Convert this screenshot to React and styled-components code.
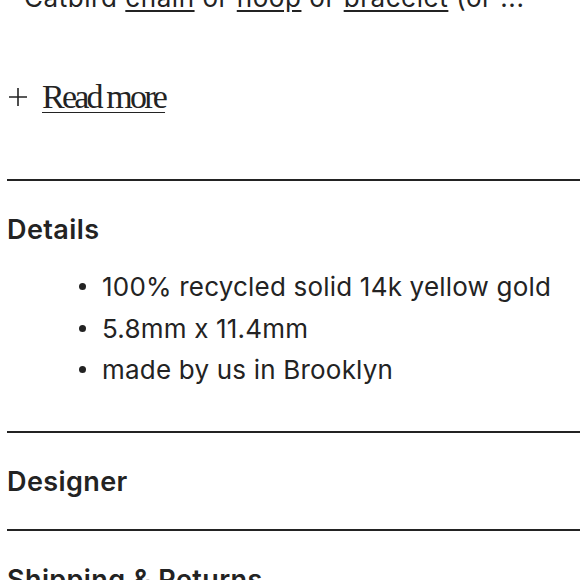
import React from "react"
import styled, { createGlobalStyle } from "styled-components"

const GlobalStyle = createGlobalStyle`
  html, body {
    margin: 0;
    padding: 0;
    background: #fff;
    overflow: hidden;
  }
  body {
    font-family: "Inter", "Lato", sans-serif;
    color: #232323;
  }
`

const Page = styled.div`
  width: 580px;
  height: 580px;
  overflow: hidden;
  padding-left: 7px;
  box-sizing: border-box;
`

const Scroll = styled.div`
  margin-top: -20px;
`

const Blurb = styled.p`
  margin: 0;
  padding-left: 17px;
  font-size: 26px;
  line-height: 36px;
  letter-spacing: 0.55px;
  white-space: nowrap;

  a {
    color: inherit;
    text-decoration: underline;
    text-underline-offset: 3px;
  }
`

const ReadMore = styled.button`
  display: flex;
  align-items: center;
  gap: 14px;
  margin: 62px 0 0;
  padding: 0;
  border: 0;
  background: none;
  color: #232323;
  cursor: pointer;

  span {
    font-family: "Liberation Serif", serif;
    font-size: 34px;
    letter-spacing: -2.8px;
    text-decoration: underline;
    text-decoration-thickness: 1px;
    text-underline-offset: 4px;
  }
`

const Plus = styled.svg`
  width: 20px;
  height: 20px;
  margin-left: 1px;
`

const Spacer = styled.div`
  height: 63px;
`

const Section = styled.section`
  border-top: 2px solid #232323;
  padding: ${({ $open }) => ($open ? "33px 0 40px" : "33px 0 31px")};
`

const Heading = styled.h3`
  margin: 0;
  font-size: 27px;
  line-height: 32px;
  font-weight: 600;
  letter-spacing: 0.4px;
`

const List = styled.ul`
  margin: 20px 0 0;
  padding-left: 72px;
  list-style: none;
  font-size: 26px;
  line-height: 41.5px;
  letter-spacing: 0.2px;
`

const Item = styled.li`
  display: flex;
  align-items: center;

  &::before {
    content: "";
    flex: none;
    width: 7px;
    height: 7px;
    margin-right: 16px;
    border-radius: 50%;
    background: #232323;
  }
`

const details = [
  "100% recycled solid 14k yellow gold",
  "5.8mm x 11.4mm",
  "made by us in Brooklyn",
]

const App = () => {
  return (
    <>
      <GlobalStyle />
      <Page>
        <Scroll>
          <Blurb>
            Catbird <a href="#">chain</a> or <a href="#">hoop</a> or{" "}
            <a href="#">bracelet</a> (or ...
          </Blurb>
          <ReadMore>
            <Plus viewBox="0 0 20 20">
              <path d="M10 1v18M1 10h18" stroke="#232323" strokeWidth="1.6" fill="none" />
            </Plus>
            <span>Read more</span>
          </ReadMore>
          <Spacer />
          <Section $open>
            <Heading>Details</Heading>
            <List>
              {details.map((d) => (
                <Item key={d}>{d}</Item>
              ))}
            </List>
          </Section>
          <Section>
            <Heading>Designer</Heading>
          </Section>
          <Section>
            <Heading>Shipping &amp; Returns</Heading>
          </Section>
        </Scroll>
      </Page>
    </>
  )
}

export default App
